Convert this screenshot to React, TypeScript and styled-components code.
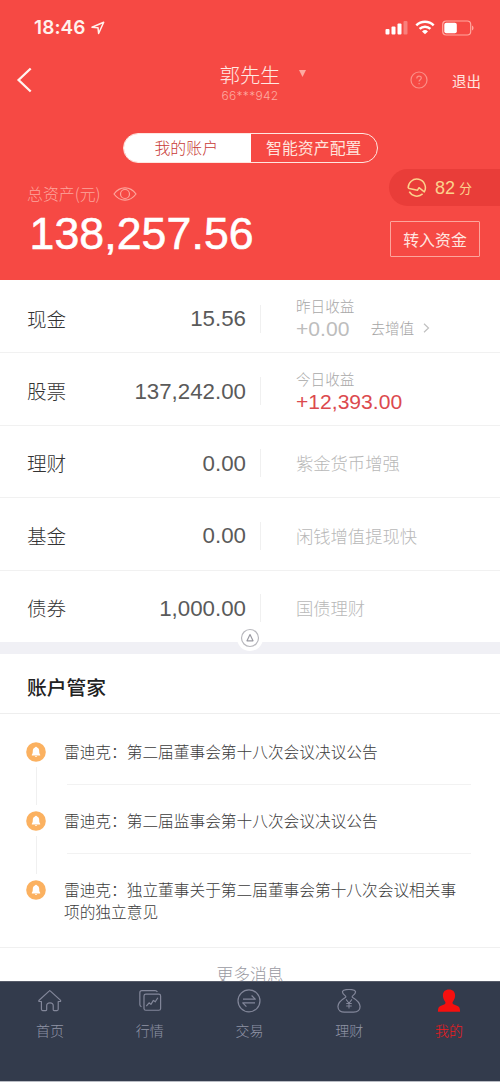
import React from 'react';
import styled, { createGlobalStyle } from 'styled-components';

const GlobalStyle = createGlobalStyle`
  * { box-sizing: border-box; }
  body {
    margin: 0;
    background: #fff;
    font-family: 'Noto Sans CJK SC', sans-serif;
    font-weight: 300;
    -webkit-font-smoothing: antialiased;
  }
`;

const Screen = styled.div`
  width: 500px;
  height: 1082px;
  overflow: hidden;
  display: flex;
  flex-direction: column;
  background: #fff;
`;

const Hero = styled.header`
  height: 280px;
  flex: none;
  background: #f64944;
  color: #fff;
`;

const StatusBar = styled.div`
  height: 54px;
  padding: 1px 26px 0 34px;
  display: flex;
  align-items: center;
  justify-content: space-between;
`;

const Clock = styled.div`
  display: flex;
  align-items: center;
  gap: 5px;
  font: 600 19px/24px Inter, sans-serif;
  letter-spacing: 0.1px;
  color: #fff1ec;
`;

const StatusIcons = styled.div`
  display: flex;
  align-items: center;
  gap: 7px;
`;

const TitleBar = styled.div`
  height: 56px;
  display: grid;
  grid-template-columns: 150px 200px 150px;
`;

const BackButton = styled.div`
  padding: 13px 0 0 16px;
`;

const Account = styled.div`
  display: flex;
  flex-direction: column;
  align-items: center;
  padding-top: 9px;
`;

const AccountName = styled.div`
  position: relative;
  font-size: 20.2px;
  line-height: 24px;
  color: #ffeae4;
`;

const Caret = styled.svg`
  position: absolute;
  left: 78px;
  top: 6px;
`;

const AccountNumber = styled.div`
  margin-top: 2px;
  font: 300 12px/14px Inter, sans-serif;
  letter-spacing: 0.3px;
  color: #fdaaa0;
`;

const TitleActions = styled.div`
  display: flex;
  align-items: center;
  justify-content: flex-end;
  height: 52px;
  gap: 24px;
  padding-right: 19px;
  font-size: 14.5px;
  font-weight: 400;
  color: #ffe6e0;
`;

const Segments = styled.div`
  width: 255px;
  height: 30px;
  margin: 23px auto 0 122.5px;
  border: 1.5px solid #ffe6e0;
  border-radius: 15px;
  display: flex;
  overflow: hidden;
`;

const Segment = styled.div<{ $active?: boolean }>`
  flex: 1;
  display: flex;
  align-items: center;
  justify-content: center;
  padding-right: ${p => (p.$active ? '2px' : '0')};
  font-size: 15.9px;
  line-height: 24px;
  font-weight: ${p => (p.$active ? 300 : 400)};
  color: ${p => (p.$active ? '#c83a36' : '#ffe3dc')};
  background: ${p => (p.$active ? '#fff' : 'transparent')};
`;

const AssetArea = styled.div`
  display: flex;
  justify-content: space-between;
  height: 117px;
`;

const AssetTotal = styled.div`
  padding: 19px 0 0 27px;
`;

const AssetLabel = styled.div`
  display: flex;
  align-items: center;
  gap: 12px;
  font-size: 15.9px;
  line-height: 24px;
  color: #fda59c;
`;

const AssetValue = styled.div`
  font: 400 44.6px/50px 'Liberation Sans', sans-serif;
  -webkit-text-stroke: 0.6px #fff;
  letter-spacing: 0.1px;
  padding: 3px 0 0 2.5px;
`;

const AssetActions = styled.div`
  display: flex;
  flex-direction: column;
  align-items: flex-end;
  padding-top: 6px;
`;

const Score = styled.div`
  width: 111px;
  height: 37px;
  border-radius: 19px 0 0 19px;
  background: #e93d39;
  color: #fcd18c;
  display: flex;
  align-items: center;
  padding-left: 18px;
`;

const ScoreNumber = styled.span`
  font: 400 18px/24px 'Liberation Sans', sans-serif;
  margin: 0 4px 0 8px;
`;

const ScoreUnit = styled.span`
  font-size: 13px;
  font-weight: 400;
`;

const TransferButton = styled.div`
  width: 90px;
  height: 36px;
  margin: 15px 20px 0 0;
  border: 1px solid #fda59c;
  border-radius: 1px;
  display: flex;
  align-items: center;
  justify-content: center;
  font-size: 15.9px;
  font-weight: 400;
  color: #ffe6e0;
`;

const Holdings = styled.section`
  position: relative;
  flex: none;
  height: 362px;
  display: grid;
  grid-template-rows: repeat(5, 72.4px);
  padding-top: 1px;
`;

const HoldingRow = styled.div`
  display: grid;
  grid-template-columns: 100px 146px 15px 1fr;
  align-items: center;
  padding-top: 4px;
  border-bottom: 1px solid #f1f1f1;
  &:nth-of-type(5) {
    height: 71.4px;
    border-bottom: 0;
  }
`;

const HoldingName = styled.div`
  padding-left: 27px;
  font-size: 19.6px;
  line-height: 28px;
  color: #333;
`;

const HoldingValue = styled.div`
  padding-top: 1px;
  text-align: right;
  font: 400 22.3px/28px 'Liberation Sans', sans-serif;
  color: #5a5a5a;
`;

const Divider = styled.div`
  height: 28px;
  border-right: 1px solid #f0f0f0;
`;

const HoldingNote = styled.div`
  padding-left: 35px;
  font-size: 17.3px;
  line-height: 26px;
  color: #b8b8b8;
`;

const GainNote = styled.div`
  padding-left: 35px;
  margin-top: -3px;
`;

const GainLabel = styled.div`
  font-size: 14.6px;
  line-height: 21px;
  color: #a8a8a8;
`;

const GainLine = styled.div`
  display: flex;
  align-items: center;
  height: 23px;
`;

const GainValue = styled.span<{ $up?: boolean }>`
  padding-top: 2px;
  font: 400 21.1px/21px 'Liberation Sans', sans-serif;
  color: ${p => (p.$up ? '#dc4a4e' : '#bdbdbd')};
`;

const GainLink = styled.span`
  display: flex;
  align-items: center;
  gap: 9px;
  margin-left: 21px;
  font-size: 14.6px;
  line-height: 22px;
  color: #a4a4a4;
`;

const Collapse = styled.div`
  position: absolute;
  left: 237px;
  top: 345px;
  width: 26px;
  height: 26px;
  border-radius: 50%;
  background: #fff;
`;

const Band = styled.div`
  height: 12px;
  flex: none;
  background: #f0f0f5;
`;

const SectionTitle = styled.h2`
  margin: 0;
  flex: none;
  height: 60px;
  padding: 5px 0 0 27px;
  border-bottom: 1px solid #eee;
  font-size: 19.8px;
  line-height: 56px;
  font-weight: 500;
  color: #222;
`;

const Notices = styled.section`
  flex: none;
  height: 234px;
  padding-top: 27px;
  border-bottom: 1px solid #f0f0f0;
`;

const Notice = styled.div`
  display: grid;
  grid-template-columns: 64px 1fr;
  height: 69px;
`;

const Track = styled.div`
  padding: 1px 0 0 26px;
  display: flex;
  flex-direction: column;
  gap: 5px;
`;

const Thread = styled.div`
  width: 1px;
  height: 38px;
  margin-left: 10px;
  background: #f0f0f0;
`;

const NoticeText = styled.div<{ $last?: boolean }>`
  font-size: 15.7px;
  line-height: 22px;
  color: #3c3c3c;
  white-space: pre-line;
  margin-right: 29px;
  height: ${p => (p.$last ? '50px' : '44px')};
  background: ${p => (p.$last ? 'none' : 'linear-gradient(#f2f2f2, #f2f2f2) 3px 100% / 100% 1px no-repeat')};
`;

const More = styled.div`
  height: 33px;
  flex: none;
  overflow: hidden;
  padding-top: 12px;
  text-align: center;
  font-size: 16.8px;
  line-height: 28px;
  color: #9a9aa2;
`;

const TabBar = styled.nav`
  height: 100px;
  flex: none;
  background: #333b4c;
  display: grid;
  grid-template-columns: repeat(5, 1fr);
  padding-right: 1px;
  border-top: 1px solid #565b69;
`;

const Tab = styled.div<{ $active?: boolean }>`
  display: flex;
  flex-direction: column;
  align-items: center;
  padding-top: 7px;
  font-size: 14px;
  line-height: 22px;
  gap: 4.5px;
  color: ${p => (p.$active ? '#f01a1c' : '#9094a6')};
`;

const HomeEdge = styled.div`
  height: 1px;
  flex: none;
  background: #b9bcc4;
`;

const Bell = () => (
  <svg width="20" height="20" viewBox="0 0 20 20">
    <circle cx="10" cy="10" r="9.8" fill="#fbb160" />
    <path d="M10 4.700c.6 0 1 .3 1 .8 1.500.5 2.200 1.700 2.200 3.200 0 2.100.3 3.200 1 4v.9H5.800v-.9c.7-.8 1-1.900 1-4 0-1.500.7-2.700 2.200-3.200 0-.5.400-.8 1-.8zM8.800 13.900h2.400c-.2.600-.6.900-1.200.9s-1-.3-1.200-.9z" fill="#fff" />
  </svg>
);

const tabs = [
  { label: '首页', icon: (
    <path d="M3.700 13.500H1.700c-1 0-1.100-.8-.5-1.400L12 2.200c.5-.5 1-.5 1.500 0L24.200 12c.7.700.5 1.500-.5 1.500h-1.800V22c0 .9-.4 1.300-1.300 1.300h-3.200c-.6 0-.9-.3-.9-.9v-4.200c0-2.200-1.300-3.200-3.500-3.200s-3.600 1-3.600 3.200v4.200c0 .6-.3.900-.9.900H5c-.9 0-1.300-.4-1.300-1.300z" />
  ) },
  { label: '行情', icon: (
    <>
      <rect x="6.500" y="5.500" width="18" height="17.500" rx="2" />
      <path d="M3.800 19.200C2.600 18.800 2 18 2 16.800V4c0-1.400.8-2.200 2.200-2.200h14.300c1.300 0 2 .5 2.500 1.500M9 18.600l3-3.700 2 1.700 2.700-4.300 2 1.500 2.800-4.400" />
    </>
  ) },
  { label: '交易', icon: (
    <>
      <circle cx="13" cy="12.800" r="11.900" />
      <path d="M6.500 11h13.300l-4-4M19.500 15H6.200l4 4" />
    </>
  ) },
  { label: '理财', icon: (
    <>
      <path d="M9 7.400C7 6 5.400 4.200 6.100 2.400 6.700.9 8.500.7 10 .6c2-.3 4-.3 6 0 1.500.1 3.300.3 3.900 1.800.7 1.800-.9 3.600-2.900 5-.7.5-.7 1.200 0 1.700 4.700 2.800 8 6.300 8 9.900 0 4.500-3.500 6-7.200 6H8.200c-3.700 0-7.200-1.500-7.200-6 0-3.600 3.300-7.100 8-9.900.7-.5.700-1.200 0-1.700z" />
      <path d="M9.800 11.200l3.200 4.200 3.200-4.200M13 15.400v5.800M10 15.600h6M10 18.300h6" strokeWidth="1.100" />
    </>
  ) },
  { label: '我的', active: true, icon: (
    <path d="M13 .5c4.200 0 6.600 2.500 6.600 6.200 0 2.500-.8 4.900-2.300 6.700-1 1.300-.5 2.700 1 3.400l4 1.700c1.900.8 2.700 2.500 2.700 6.200H1c0-3.700.8-5.400 2.700-6.200l4-1.700c1.500-.7 2-2.100 1-3.400-1.500-1.800-2.300-4.200-2.300-6.700C6.400 3 8.800.5 13 .5z" fill="#f5100f" stroke="none" />
  ) },
];

const notices = [
  '雷迪克：第二届董事会第十八次会议决议公告',
  '雷迪克：第二届监事会第十八次会议决议公告',
  '雷迪克：独立董事关于第二届董事会第十八次会议相关事\n项的独立意见',
];

const Gain = ({ label, value, up, link }: { label: string; value: string; up?: boolean; link?: string }) => (
  <GainNote>
    <GainLabel>{label}</GainLabel>
    <GainLine>
      <GainValue $up={up}>{value}</GainValue>
      {link && (
        <GainLink>
          {link}
          <svg width="7" height="10" viewBox="0 0 7 10" fill="none" stroke="#c0c0c0" strokeWidth="1.200"><path d="M1 .7L5.500 5 1 9.300" /></svg>
        </GainLink>
      )}
    </GainLine>
  </GainNote>
);

const holdings = [
  { name: '现金', value: '15.56', note: <Gain label="昨日收益" value="+0.00" link="去增值" /> },
  { name: '股票', value: '137,242.00', note: <Gain label="今日收益" value="+12,393.00" up /> },
  { name: '理财', value: '0.00', note: <HoldingNote>紫金货币增强</HoldingNote> },
  { name: '基金', value: '0.00', note: <HoldingNote>闲钱增值提现快</HoldingNote> },
  { name: '债券', value: '1,000.00', note: <HoldingNote>国债理财</HoldingNote> },
];

export default function App() {
  return (
    <>
      <GlobalStyle />
      <Screen>
        <Hero>
          <StatusBar>
            <Clock>
              18:46
              <svg width="14" height="14" viewBox="0 0 14 14" fill="none" stroke="#fff1ec" strokeWidth="1.500" strokeLinejoin="round"><path d="M1 6.200L12.700 1.200 7.600 12.500 7 6.700z" /></svg>
            </Clock>
            <StatusIcons>
              <svg width="23" height="15" viewBox="0 0 23 15" fill="#fff">
                <rect x="0.500" y="9" width="4" height="5.500" rx="1" />
                <rect x="6.500" y="6.500" width="4" height="8" rx="1" />
                <rect x="12.500" y="3.500" width="4" height="11" rx="1" />
                <rect x="18.500" y="1" width="4" height="13.500" rx="1" opacity="0.300" />
              </svg>
              <svg width="20" height="15" viewBox="0 0 20 15" fill="none" stroke="#fff" strokeWidth="2.500">
                <path d="M1.300 5.400a12.400 12.400 0 0 1 17.400 0M4.600 8.900a7.700 7.700 0 0 1 10.800 0" />
                <path d="M10 14.300L7 11.400a4.300 4.300 0 0 1 6 0z" fill="#fff" stroke="none" />
              </svg>
              <svg width="32" height="16" viewBox="0 0 32 16">
                <rect x="0.700" y="1" width="28" height="14" rx="3.500" fill="none" stroke="#ffa79e" strokeWidth="1.200" />
                <rect x="2.300" y="2.700" width="12.500" height="10.600" rx="2" fill="#fff" />
                <path d="M30 5.500c2 .9 2 4.100 0 5z" fill="#ffa79e" />
              </svg>
            </StatusIcons>
          </StatusBar>
          <TitleBar>
            <BackButton>
              <svg width="17" height="26" viewBox="0 0 17 26" fill="none" stroke="#fff4f0" strokeWidth="2.300"><path d="M14.700 1.500L2.600 13l12.100 11.500" /></svg>
            </BackButton>
            <Account>
              <AccountName>
                郭先生
                <Caret width="9" height="9" viewBox="0 0 9 9"><path d="M1 1h7L4.500 8z" fill="#fdaaa0" /></Caret>
              </AccountName>
              <AccountNumber>66***942</AccountNumber>
            </Account>
            <TitleActions>
              <svg width="18" height="18" viewBox="0 0 18 18" fill="none" stroke="#fb9088" strokeWidth="1.200">
                <circle cx="9" cy="9" r="8" />
                <path d="M6.800 7.400c0-3 4.500-3 4.500-.3 0 1.700-2.200 1.600-2.200 3.500M9.100 11.900v1.400" />
              </svg>
              退出
            </TitleActions>
          </TitleBar>
          <Segments>
            <Segment $active>我的账户</Segment>
            <Segment>智能资产配置</Segment>
          </Segments>
          <AssetArea>
            <AssetTotal>
              <AssetLabel>
                总资产(元)
                <svg width="24" height="16" viewBox="0 0 24 16" fill="none" stroke="#fda59c" strokeWidth="1.200">
                  <path d="M1 8C7 -.2 17 -.2 23 8 17 16.200 7 16.200 1 8z" />
                  <circle cx="12" cy="8" r="4.500" />
                </svg>
              </AssetLabel>
              <AssetValue>138,257.56</AssetValue>
            </AssetTotal>
            <AssetActions>
              <Score>
                <svg width="20" height="20" viewBox="0 0 20 20" fill="none" stroke="#fcd18c" strokeWidth="1.500" strokeLinejoin="round">
                  <path d="M1.200 10.300A8.600 8.600 0 1 1 17.300 13.900L12 9.700 10.400 12.300 1.200 10.300M2.300 13.700a8.600 8.600 0 0 0 13.300 2.200" />
                </svg>
                <ScoreNumber>82</ScoreNumber>
                <ScoreUnit>分</ScoreUnit>
              </Score>
              <TransferButton>转入资金</TransferButton>
            </AssetActions>
          </AssetArea>
        </Hero>
        <Holdings>
          {holdings.map(h => (
            <HoldingRow key={h.name}>
              <HoldingName>{h.name}</HoldingName>
              <HoldingValue>{h.value}</HoldingValue>
              <Divider />
              {h.note}
            </HoldingRow>
          ))}
          <Collapse>
            <svg width="26" height="26" viewBox="0 0 26 26" fill="none" stroke="#b8b8bd">
              <circle cx="13" cy="13" r="8.500" strokeWidth="1.200" />
              <path d="M13 9.500l3 6.300h-6z" stroke="#9a9aa2" strokeWidth="1.200" strokeLinejoin="round" />
            </svg>
          </Collapse>
        </Holdings>
        <Band />
        <SectionTitle>账户管家</SectionTitle>
        <Notices>
          {notices.map((text, i) => (
            <Notice key={text}>
              <Track>
                <Bell />
                {i < notices.length - 1 && <Thread />}
              </Track>
              <NoticeText $last={i === notices.length - 1}>{text}</NoticeText>
            </Notice>
          ))}
        </Notices>
        <More>更多消息</More>
        <TabBar>
          {tabs.map(t => (
            <Tab key={t.label} $active={t.active}>
              <svg width="24" height="25" viewBox="0 0 26 27" fill="none" stroke="#83879a" strokeWidth="1.300" strokeLinejoin="round">{t.icon}</svg>
              {t.label}
            </Tab>
          ))}
        </TabBar>
        <HomeEdge />
      </Screen>
    </>
  );
}
